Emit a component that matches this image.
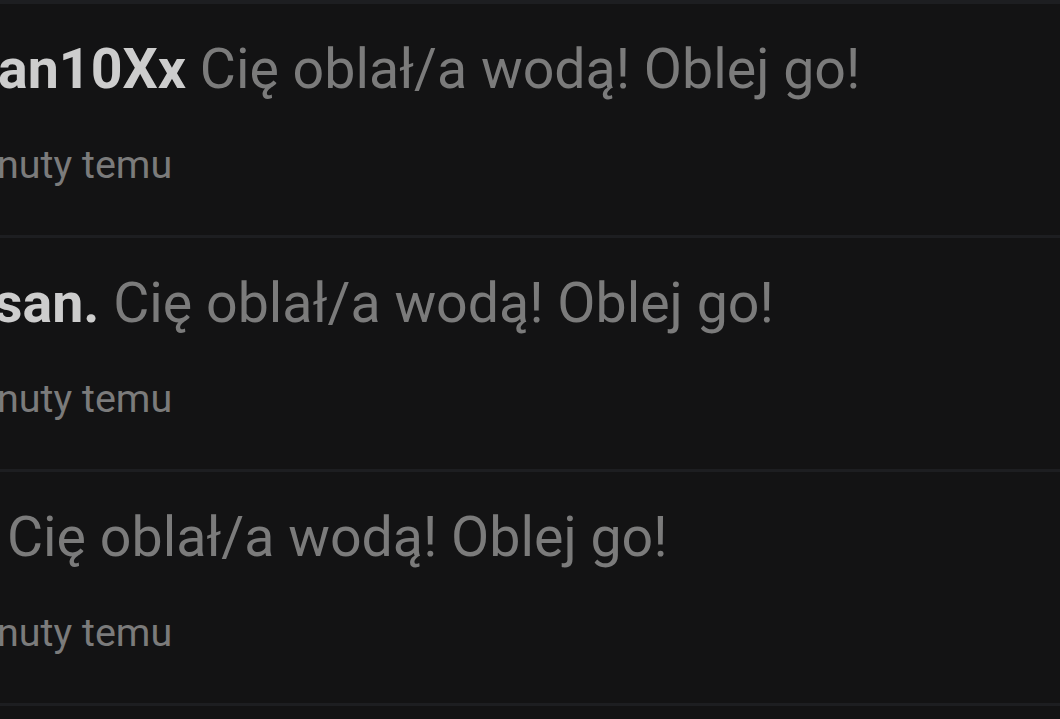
import React from "react";

function Row({ name, nameMl }: { name: string; nameMl: string }) {
  return (
    <div className="h-[231px] overflow-hidden pt-[32px]">
      <p className={`whitespace-nowrap text-[55.5px] leading-[67px] ${nameMl}`}>
        {name && <span className="font-bold text-[#cdcdcd]">{name} </span>}
        <span className="text-[#7b7b7b]">Cię oblał/a wodą! Oblej go!</span>
      </p>
      <p className="ml-[-3px] mt-[38px] whitespace-nowrap text-[39.5px] leading-[48px] text-[#7b7b7b]">
        nuty temu
      </p>
    </div>
  );
}

export default function App() {
  return (
    <div
      className="h-[719px] w-[1060px] overflow-hidden bg-[#131314]"
      style={{ fontFamily: "Roboto, 'Noto Sans', sans-serif" }}
    >
      <div className="h-[4px] bg-[#1d1e21]" />
      <Row name="an10Xx" nameMl="ml-[-2px]" />
      <div className="h-[3px] bg-[#1d1e21]" />
      <Row name="san." nameMl="ml-[-6px]" />
      <div className="h-[3px] bg-[#1d1e21]" />
      <Row name="" nameMl="ml-[7px]" />
      <div className="h-[3px] bg-[#1d1e21]" />
    </div>
  );
}
